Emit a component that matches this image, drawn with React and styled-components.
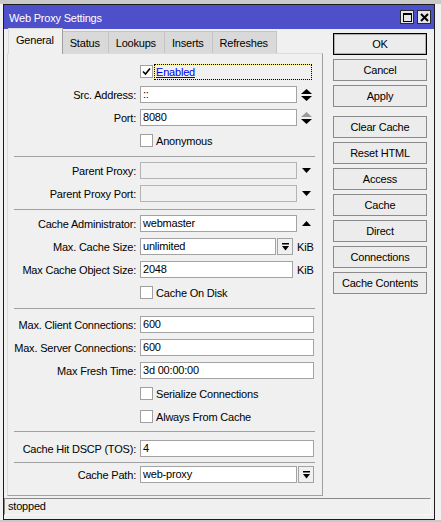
import styled, { createGlobalStyle } from "styled-components";

const GlobalStyle = createGlobalStyle`
  html, body {
    margin: 0;
    padding: 0;
  }
  body {
    background: linear-gradient(#c9c9c9 0 4px, #f2f2f2 4px);
    font-family: "Liberation Sans", Arial, sans-serif;
    font-size: 11px;
    letter-spacing: -0.2px;
    color: #000;
  }
  #root {
    padding: 4px 0 0 3px;
  }
`;

const sections = [
  {
    rows: [
      { type: "check", label: "Enabled", checked: true, focus: true },
      { type: "field", label: "Src. Address:", value: "::", icon: "spin" },
      { type: "field", label: "Port:", value: "8080", icon: "spinDown" },
      { type: "check", label: "Anonymous" },
    ],
  },
  {
    sep: [4, 2],
    rows: [
      { type: "field", label: "Parent Proxy:", value: "", icon: "down", disabled: true },
      { type: "field", label: "Parent Proxy Port:", value: "", icon: "down", disabled: true },
    ],
  },
  {
    sep: [4, 2],
    rows: [
      { type: "field", label: "Cache Administrator:", value: "webmaster", icon: "up" },
      { type: "field", label: "Max. Cache Size:", value: "unlimited", drop: true, unit: "KiB" },
      { type: "field", label: "Max Cache Object Size:", value: "2048", unit: "KiB" },
      { type: "check", label: "Cache On Disk" },
    ],
  },
  {
    sep: [4, 4],
    rows: [
      { type: "field", label: "Max. Client Connections:", value: "600" },
      { type: "field", label: "Max. Server Connections:", value: "600" },
      { type: "field", label: "Max Fresh Time:", value: "3d 00:00:00" },
      { type: "check", label: "Serialize Connections" },
      { type: "check", label: "Always From Cache" },
    ],
  },
  { sep: [3, 5], rows: [{ type: "field", label: "Cache Hit DSCP (TOS):", value: "4" }] },
  {
    sep: [2, 0],
    rows: [{ type: "field", label: "Cache Path:", value: "web-proxy", drop: true, tight: true }],
  },
];

const tabs = ["General", "Status", "Lookups", "Inserts", "Refreshes"];

const buttons = [
  { label: "OK", main: true },
  { label: "Cancel" },
  { label: "Apply" },
  { label: "Clear Cache", spaced: true },
  { label: "Reset HTML" },
  { label: "Access" },
  { label: "Cache" },
  { label: "Direct" },
  { label: "Connections" },
  { label: "Cache Contents" },
];

function Arrows({ kind }) {
  if (kind === "down")
    return (
      <svg width="9" height="5" viewBox="0 0 9 5">
        <polygon points="0,0 9,0 4.5,5" fill="#000" />
      </svg>
    );
  if (kind === "up")
    return (
      <svg width="9" height="5" viewBox="0 0 9 5">
        <polygon points="0,5 9,5 4.5,0" fill="#000" />
      </svg>
    );
  const upColor = kind === "spinDown" ? "#9a9a9a" : "#000";
  return (
    <svg width="11" height="12" viewBox="0 0 11 12">
      <polygon points="0,5 11,5 5.5,0" fill={upColor} />
      <polygon points="0,7 11,7 5.5,12" fill="#000" />
    </svg>
  );
}

function DropGlyph() {
  return (
    <svg width="7" height="8" viewBox="0 0 7 8">
      <rect x="0" y="0" width="7" height="1.5" fill="#000" />
      <polygon points="0,3 7,3 3.5,7.5" fill="#000" />
    </svg>
  );
}

function FieldRow({ item }) {
  let width = 174;
  if (item.icon || item.tight) width = 157;
  if (item.unit) width = item.drop ? 136 : 153;
  return (
    <Row>
      <Label>{item.label}</Label>
      <Field>
        <Input $w={width} $disabled={item.disabled}>
          {item.value}
        </Input>
        {item.drop && (
          <DropBtn>
            <DropGlyph />
          </DropBtn>
        )}
        {item.icon && (
          <IconSlot>
            <Arrows kind={item.icon} />
          </IconSlot>
        )}
        {item.unit && <Unit>{item.unit}</Unit>}
      </Field>
    </Row>
  );
}

function CheckRow({ item }) {
  return (
    <Row>
      <Label />
      <Field>
        <Box>
          {item.checked && (
            <svg width="9" height="9" viewBox="0 0 9 9">
              <path d="M1 4.5 L3.5 7 L8 1.5" stroke="#000" strokeWidth="1.6" fill="none" />
            </svg>
          )}
        </Box>
        <CheckText $focus={item.focus}>{item.label}</CheckText>
      </Field>
    </Row>
  );
}

export default function App() {
  return (
    <>
      <GlobalStyle />
      <Window>
        <TitleBar>
          <Title>Web Proxy Settings</Title>
          <TitleButtons>
            <TitleBtn>
              <svg width="9" height="9" viewBox="0 0 9 9">
                <rect x="0.5" y="0.5" width="8" height="8" fill="none" stroke="#000" />
                <rect x="0" y="0" width="9" height="2" fill="#000" />
              </svg>
            </TitleBtn>
            <TitleBtn>
              <svg width="9" height="9" viewBox="0 0 9 9">
                <path d="M1 1 L8 8 M8 1 L1 8" stroke="#000" strokeWidth="2" />
              </svg>
            </TitleBtn>
          </TitleButtons>
        </TitleBar>
        <Main>
          <LeftCol>
            <TabStrip>
              {tabs.map((t, i) => (
                <Tab key={t} $active={i === 0}>
                  {t}
                </Tab>
              ))}
            </TabStrip>
            <Panel>
              {sections.map((sec, si) => (
                <Section key={si}>
                  {sec.sep && <Separator $top={sec.sep[0]} $bottom={sec.sep[1]} />}
                  {sec.rows.map((item) =>
                    item.type === "check" ? (
                      <CheckRow key={item.label} item={item} />
                    ) : (
                      <FieldRow key={item.label} item={item} />
                    )
                  )}
                </Section>
              ))}
            </Panel>
          </LeftCol>
          <SideCol>
            {buttons.map((b) => (
              <SideBtn key={b.label} $main={b.main} $spaced={b.spaced}>
                {b.label}
              </SideBtn>
            ))}
          </SideCol>
        </Main>
        <StatusBar>stopped</StatusBar>
      </Window>
    </>
  );
}

const Window = styled.div`
  box-sizing: border-box;
  width: 432px;
  height: 516px;
  border: 1px solid #1c1c1c;
  background: #f0f0f0;
  display: flex;
  flex-direction: column;
`;

const TitleBar = styled.div`
  height: 24px;
  background: #4e50c9;
  display: flex;
  align-items: center;
  justify-content: space-between;
  padding: 0 3px 0 5px;
`;

const Title = styled.span`
  color: #fff;
  padding-top: 1px;
`;

const TitleButtons = styled.div`
  display: flex;
  gap: 3px;
`;

const TitleBtn = styled.div`
  box-sizing: border-box;
  width: 14px;
  height: 14px;
  background: #e6e6e6;
  border: 1px solid #2a2a2a;
  display: flex;
  align-items: center;
  justify-content: center;
`;

const Main = styled.div`
  display: flex;
  gap: 10px;
  padding: 0 7px 0 3px;
`;

const LeftCol = styled.div`
  width: 316px;
  display: flex;
  flex-direction: column;
`;

const TabStrip = styled.div`
  height: 24px;
  display: flex;
  align-items: flex-end;
  padding-left: 1px;
`;

const Tab = styled.div`
  box-sizing: border-box;
  padding: 0 8px 0 7px;
  height: ${(p) => (p.$active ? "26px" : "22px")};
  margin-bottom: ${(p) => (p.$active ? "-1px" : "0")};
  position: relative;
  z-index: ${(p) => (p.$active ? 1 : 0)};
  display: flex;
  align-items: center;
  padding-bottom: ${(p) => (p.$active ? "3px" : "0")};
  background: ${(p) => (p.$active ? "#f0f0f0" : "#d9d9d9")};
  border: 1px solid ${(p) => (p.$active ? "#d9d9d9" : "#c4c4c4")};
  border-bottom: none;
  border-right-color: ${(p) => (p.$active ? "#a0a0a0" : "#c4c4c4")};
  margin-left: ${(p) => (p.$active ? "0" : "-1px")};
`;

const Panel = styled.div`
  box-sizing: border-box;
  height: 443px;
  border: 1px solid #a0a0a0;
  border-top-color: #dcdcdc;
  border-left-color: #dcdcdc;
  padding-top: 6px;
`;

const Section = styled.div`
  display: flex;
  flex-direction: column;
`;

const Separator = styled.div`
  height: 1px;
  background: #a0a0a0;
  margin: ${(p) => p.$top}px 7px ${(p) => p.$bottom}px 6px;
`;

const Row = styled.div`
  height: 23px;
  display: flex;
  align-items: center;
`;

const Label = styled.div`
  width: 128px;
  margin-right: 4px;
  text-align: right;
  white-space: nowrap;
`;

const Field = styled.div`
  display: flex;
  align-items: center;
`;

const Input = styled.div`
  box-sizing: border-box;
  width: ${(p) => p.$w}px;
  height: 17px;
  line-height: 15px;
  padding-left: 2px;
  background: ${(p) => (p.$disabled ? "#f0f0f0" : "#fff")};
  border: 1px solid ${(p) => (p.$disabled ? "#b4b4b4" : "#a3a3a3")};
  white-space: nowrap;
  overflow: hidden;
`;

const IconSlot = styled.div`
  width: 17px;
  display: flex;
  justify-content: center;
  padding-left: 1px;
`;

const DropBtn = styled.div`
  box-sizing: border-box;
  width: 16px;
  height: 17px;
  margin-left: 1px;
  background: #f0f0f0;
  border: 1px solid #a3a3a3;
  display: flex;
  align-items: center;
  justify-content: center;
`;

const Unit = styled.span`
  margin-left: 4px;
`;

const Box = styled.div`
  box-sizing: border-box;
  width: 13px;
  height: 13px;
  background: #fff;
  border: 1px solid #a0a0a0;
  display: flex;
  align-items: center;
  justify-content: center;
`;

const CheckText = styled.span`
  margin-left: 2px;
  padding: 1px 0 1px 1px;
  width: ${(p) => (p.$focus ? "155px" : "auto")};
  color: ${(p) => (p.$focus ? "#0000ee" : "#000")};
  text-decoration: ${(p) => (p.$focus ? "underline" : "none")};
  outline: ${(p) => (p.$focus ? "1px dotted #000" : "none")};
  box-shadow: ${(p) => (p.$focus ? "0 0 0 1px #f5f08a" : "none")};
`;

const SideCol = styled.div`
  width: 94px;
  display: flex;
  flex-direction: column;
  gap: 4px;
  padding-top: 4px;
`;

const SideBtn = styled.div`
  box-sizing: border-box;
  height: 22px;
  margin-top: ${(p) => (p.$spaced ? "5px" : "0")};
  background: #ececec;
  border: 1px solid ${(p) => (p.$main ? "#000" : "#8a8a8a")};
  box-shadow: ${(p) => (p.$main ? "inset 0 0 0 1px #b0b0b0" : "none")};
  display: flex;
  align-items: center;
  justify-content: center;
  white-space: nowrap;
`;

const StatusBar = styled.div`
  box-sizing: border-box;
  height: 17px;
  margin: 2px 3px 0 0;
  padding-left: 3px;
  line-height: 15px;
  border: 1px solid #f8f8f8;
  border-top-color: #8a8a8a;
  border-left-color: #8a8a8a;
`;
